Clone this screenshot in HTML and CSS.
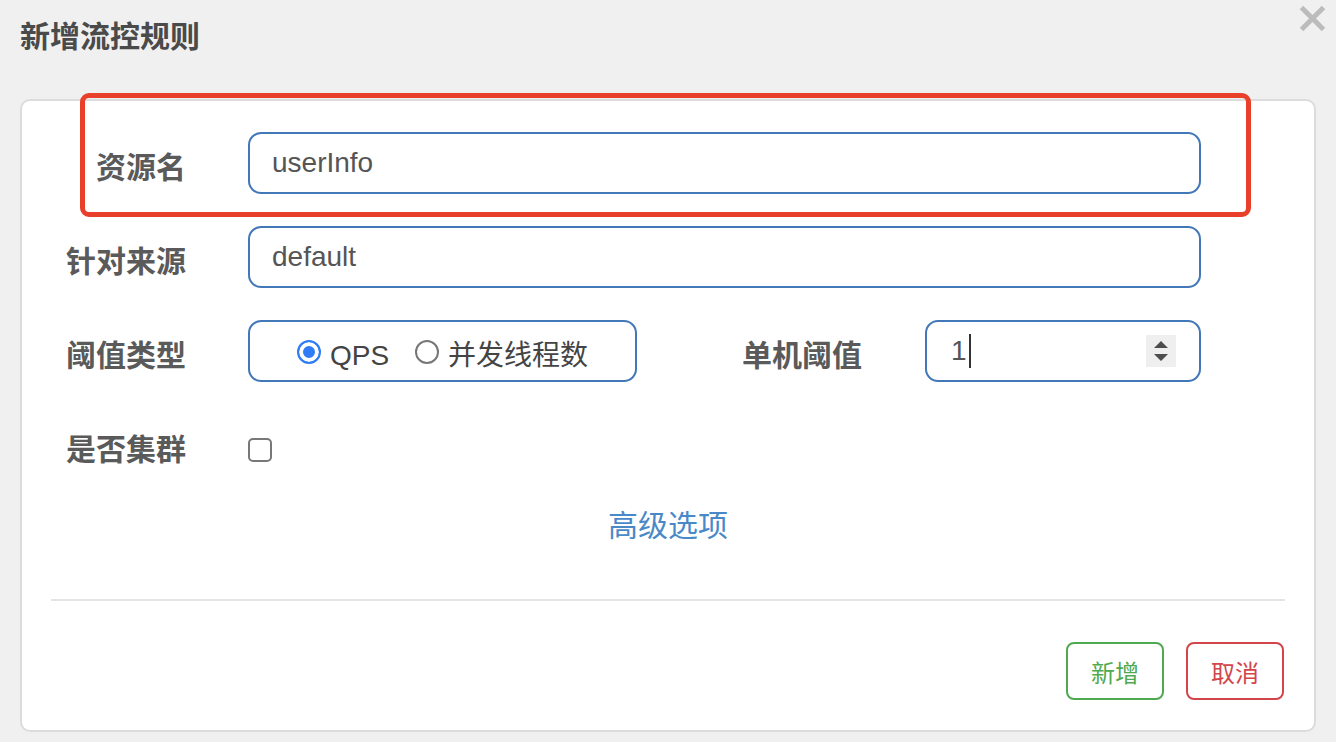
FILE: index.html
```html
<!DOCTYPE html>
<html lang="zh">
<head>
<meta charset="utf-8">
<title>新增流控规则</title>
<link rel="stylesheet" href="styles.css">
</head>
<body>
<div class="modal">
  <div class="modal-header">
    <h4 class="modal-title">新增流控规则</h4>
    <span class="close" aria-label="关闭">
      <svg width="27" height="27" viewBox="0 0 27 27"><path d="M2.5 2.5 L24.5 24.5 M24.5 2.5 L2.5 24.5" stroke="#bcbcbc" stroke-width="5" fill="none"/></svg>
    </span>
  </div>
  <div class="card">
    <div class="form">
      <div class="row row-highlight">
        <div class="highlight"></div>
        <label class="label">资源名</label>
        <div class="field"><span class="value">userInfo</span></div>
      </div>
      <div class="row">
        <label class="label">针对来源</label>
        <div class="field"><span class="value">default</span></div>
      </div>
      <div class="row">
        <label class="label">阈值类型</label>
        <div class="field radio-group">
          <span class="radio-item"><span class="radio checked"></span><span class="radio-text">QPS</span></span>
          <span class="radio-item"><span class="radio"></span><span class="radio-text">并发线程数</span></span>
        </div>
        <label class="label label-inline">单机阈值</label>
        <div class="field number">
          <span class="value">1</span><span class="caret"></span>
          <span class="spinner">
            <svg width="30" height="32" viewBox="0 0 30 32"><path d="M8 13 L15 6 L22 13 Z M8 19 L22 19 L15 26 Z" fill="#4d4d4d"/></svg>
          </span>
        </div>
      </div>
      <div class="row row-check">
        <label class="label">是否集群</label>
        <span class="checkbox"></span>
      </div>
      <div class="advanced"><a class="link">高级选项</a></div>
    </div>
    <div class="divider"></div>
    <div class="footer">
      <button class="btn btn-ok">新增</button>
      <button class="btn btn-cancel">取消</button>
    </div>
  </div>
</div>
</body>
</html>
```

FILE: styles.css
```css
* { box-sizing: border-box; }
html, body { margin: 0; padding: 0; }
body {
  background: #f0f0f0;
  font-family: "Liberation Sans", "Noto Sans CJK SC", sans-serif;
  width: 1336px;
  height: 742px;
  overflow: hidden;
}
.modal { width: 1336px; }
.modal-header {
  height: 99px;
  display: flex;
  justify-content: space-between;
  align-items: flex-start;
  padding: 0 10px 0 20px;
}
.modal-title {
  margin: 0;
  padding-top: 17px;
  font-size: 30px;
  line-height: 40px;
  font-weight: bold;
  color: #4a4a4a;
}
.close { display: block; margin-top: 5px; line-height: 0; }
.card {
  margin: 0 20px;
  height: 633px;
  background: #fff;
  border: 2px solid #dcdcdc;
  border-radius: 10px;
  padding-top: 31px;
}
.form { padding-right: 113px; }
.row {
  display: flex;
  align-items: center;
  height: 62px;
  margin-bottom: 32px;
  position: relative;
}
.row-check { margin-top: 37px; margin-bottom: 0; }
.highlight {
  position: absolute;
  left: 58px;
  top: -39px;
  width: 1171px;
  height: 124px;
  border: 5px solid #e8402a;
  border-radius: 9px;
  pointer-events: none;
}
.label {
  width: 164px;
  flex: none;
  text-align: right;
  font-size: 30px;
  font-weight: bold;
  color: #5a5a5a;
  padding-top: 10px;
  margin-right: 62px;
  line-height: 40px;
}
.row-check .label { padding-top: 0; }
.field {
  flex: 1;
  height: 62px;
  border: 2px solid #4277b8;
  border-radius: 13px;
  display: flex;
  align-items: center;
  padding: 0 22px;
  font-size: 28px;
  color: #555;
}
.value { line-height: 1; }
.radio-group {
  flex: none;
  width: 389px;
  justify-content: center;
  padding: 9px 0 0;
  color: #444;
}
.radio-item { display: flex; align-items: center; }
.radio-item + .radio-item { margin-left: 26px; }
.radio {
  width: 24px;
  height: 24px;
  border-radius: 50%;
  border: 2px solid #777;
  background: #fff;
  margin-right: 9px;
  flex: none;
  position: relative;
  top: -4px;
}
.radio.checked {
  border-color: #2f7cf6;
  background: #2f7cf6;
  box-shadow: inset 0 0 0 4px #fff;
}
.radio-text { font-size: 28px; line-height: 1; }
.label-inline {
  flex: 1;
  width: auto;
  margin-right: 63px;
}
.number {
  flex: none;
  width: 276px;
  padding: 0 23px 0 24px;
}
.caret {
  width: 2px;
  height: 34px;
  background: #333;
  margin-left: 2px;
}
.spinner {
  margin-left: auto;
  width: 30px;
  height: 32px;
  background: #efefef;
  line-height: 0;
}
.checkbox {
  width: 24px;
  height: 24px;
  border: 2px solid #777;
  border-radius: 5px;
  background: #fff;
  flex: none;
}
.advanced {
  margin-top: 25px;
  padding-left: 113px;
  text-align: center;
  line-height: 40px;
}
.link {
  font-size: 30px;
  color: #4a89c8;
  text-decoration: none;
}
.divider {
  margin: 48px 29px 0;
  height: 2px;
  background: #e5e5e5;
}
.footer {
  display: flex;
  justify-content: flex-end;
  gap: 22px;
  margin-top: 41px;
  padding-right: 30px;
}
.btn {
  width: 98px;
  height: 58px;
  background: #fff;
  border: 2px solid;
  border-radius: 8px;
  font-family: "Liberation Sans", "Noto Sans CJK SC", sans-serif;
  font-size: 24px;
  padding: 0;
}
.btn-ok { border-color: #4fa94f; color: #4fa94f; }
.btn-cancel { border-color: #d2464b; color: #d2464b; }
```
